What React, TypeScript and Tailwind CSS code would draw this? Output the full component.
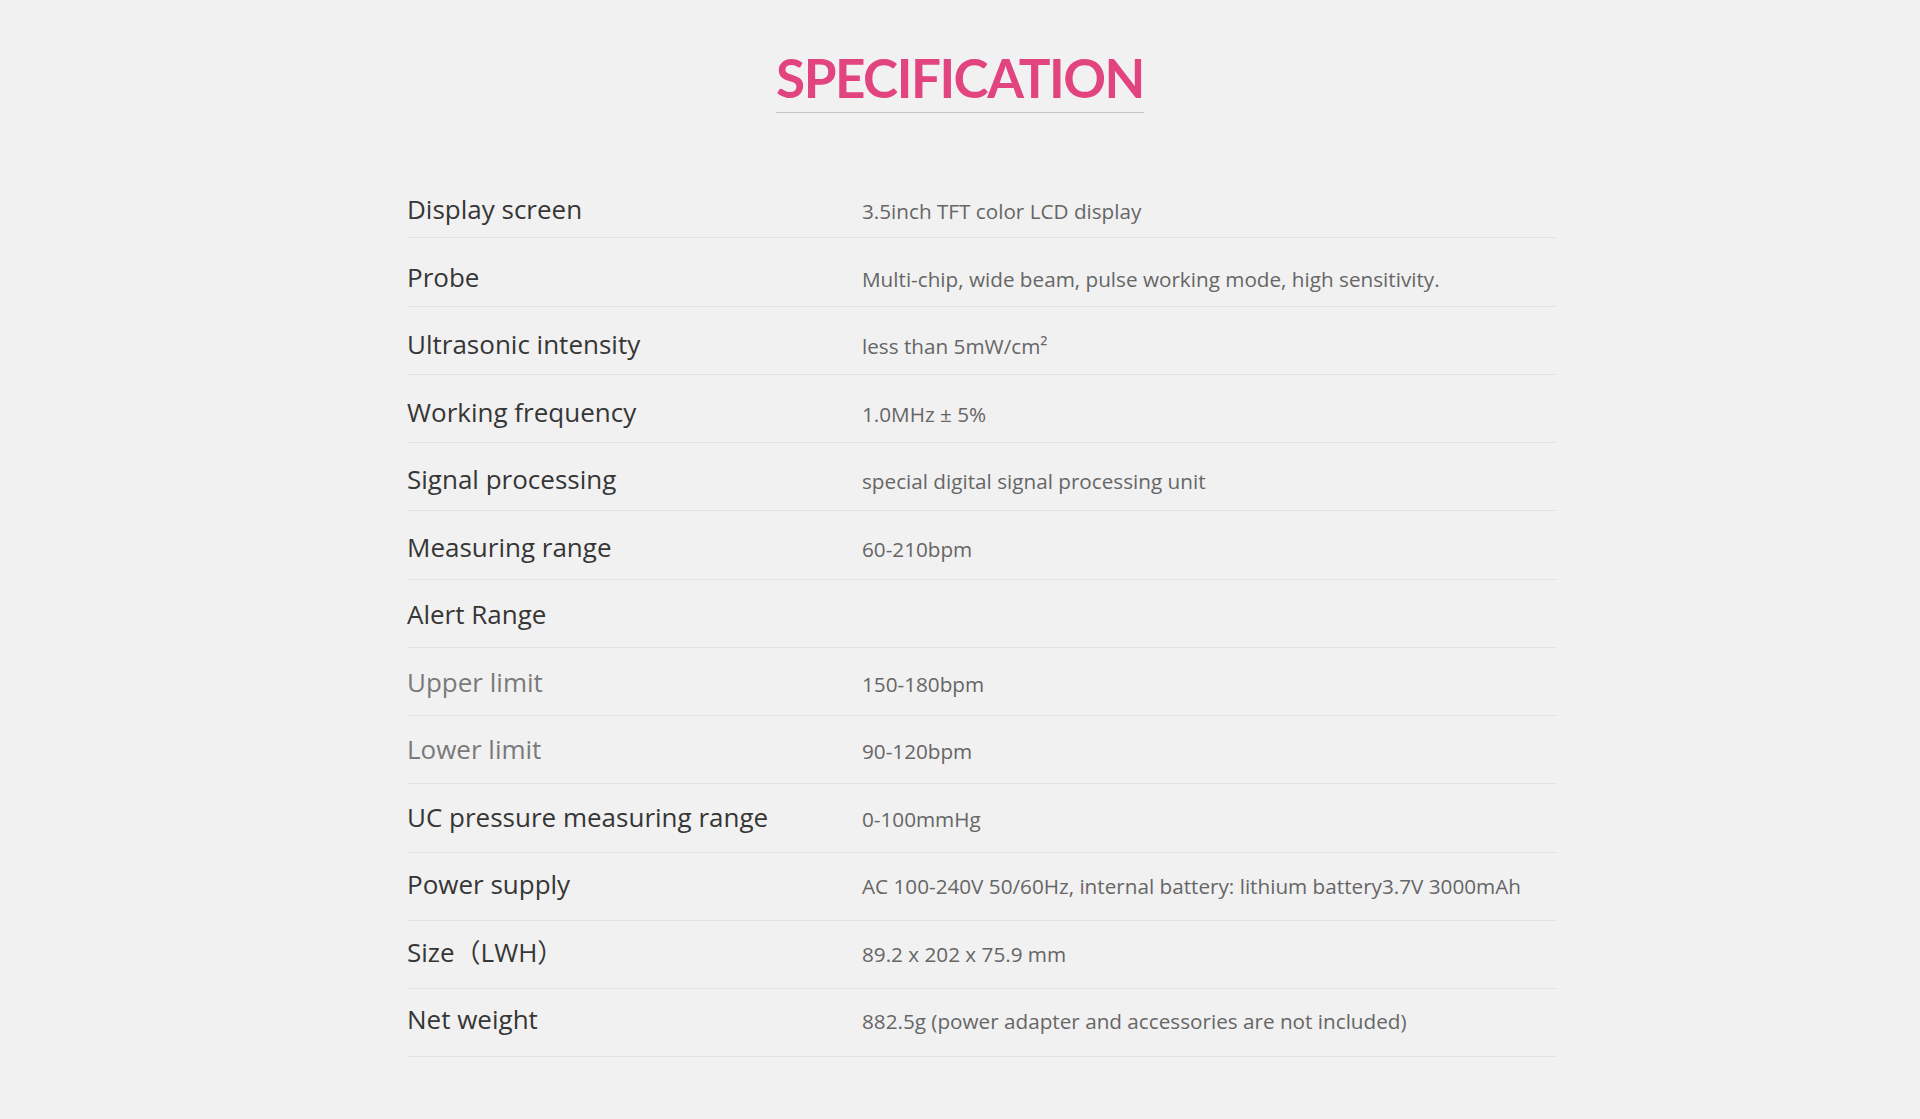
import React from 'react';

interface SpecRow {
  label: string;
  value: string;
  muted?: boolean;
}

const rows: SpecRow[] = [
  { label: 'Display screen', value: '3.5inch TFT color LCD display' },
  { label: 'Probe', value: 'Multi-chip, wide beam, pulse working mode, high sensitivity.' },
  { label: 'Ultrasonic intensity', value: 'less than 5mW/cm²' },
  { label: 'Working frequency', value: '1.0MHz ± 5%' },
  { label: 'Signal processing', value: 'special digital signal processing unit' },
  { label: 'Measuring range', value: '60-210bpm' },
  { label: 'Alert Range', value: '' },
  { label: 'Upper limit', value: '150-180bpm', muted: true },
  { label: 'Lower limit', value: '90-120bpm', muted: true },
  { label: 'UC pressure measuring range', value: '0-100mmHg' },
  { label: 'Power supply', value: 'AC 100-240V 50/60Hz, internal battery: lithium battery3.7V 3000mAh' },
  { label: 'Size（LWH）', value: '89.2 x 202 x 75.9 mm' },
  { label: 'Net weight', value: '882.5g (power adapter and accessories are not included)' },
];

const App: React.FC = () => {
  return (
    <div className="min-h-screen w-full bg-[#f1f1f1]">
      <div className="w-[1200px] mx-auto pt-[46px] pb-[60px]">
        <div className="flex justify-center">
          <h1 className="inline-block border-b border-[#c4c4c4] pb-[2px] text-[53px] leading-[64px] tracking-[-1.5px] font-bold text-[#e2447f] font-['Lato','Noto_Sans',sans-serif]">
            SPECIFICATION
          </h1>
        </div>

        <div className="ml-[47px] mr-[3px] mt-[57px]">
          {rows.map((row, i) => (
            <div
              key={row.label}
              className="flex items-baseline h-[68.25px] border-b border-[#e3e3e3]"
              style={{ paddingTop: 22 - i * 0.72 }}
            >
              <div
                className={`w-[455px] shrink-0 text-[26px] leading-[34px] font-['Open_Sans','Noto_Sans_CJK_SC',sans-serif] ${
                  row.muted ? 'text-[#7a7a7a]' : 'text-[#363636]'
                }`}
              >
                {row.label}
              </div>
              <div className="text-[20.7px] leading-[34px] text-[#666666] font-['Open_Sans','Noto_Sans',sans-serif]">
                {row.value}
              </div>
            </div>
          ))}
        </div>
      </div>
    </div>
  );
};

export default App;
